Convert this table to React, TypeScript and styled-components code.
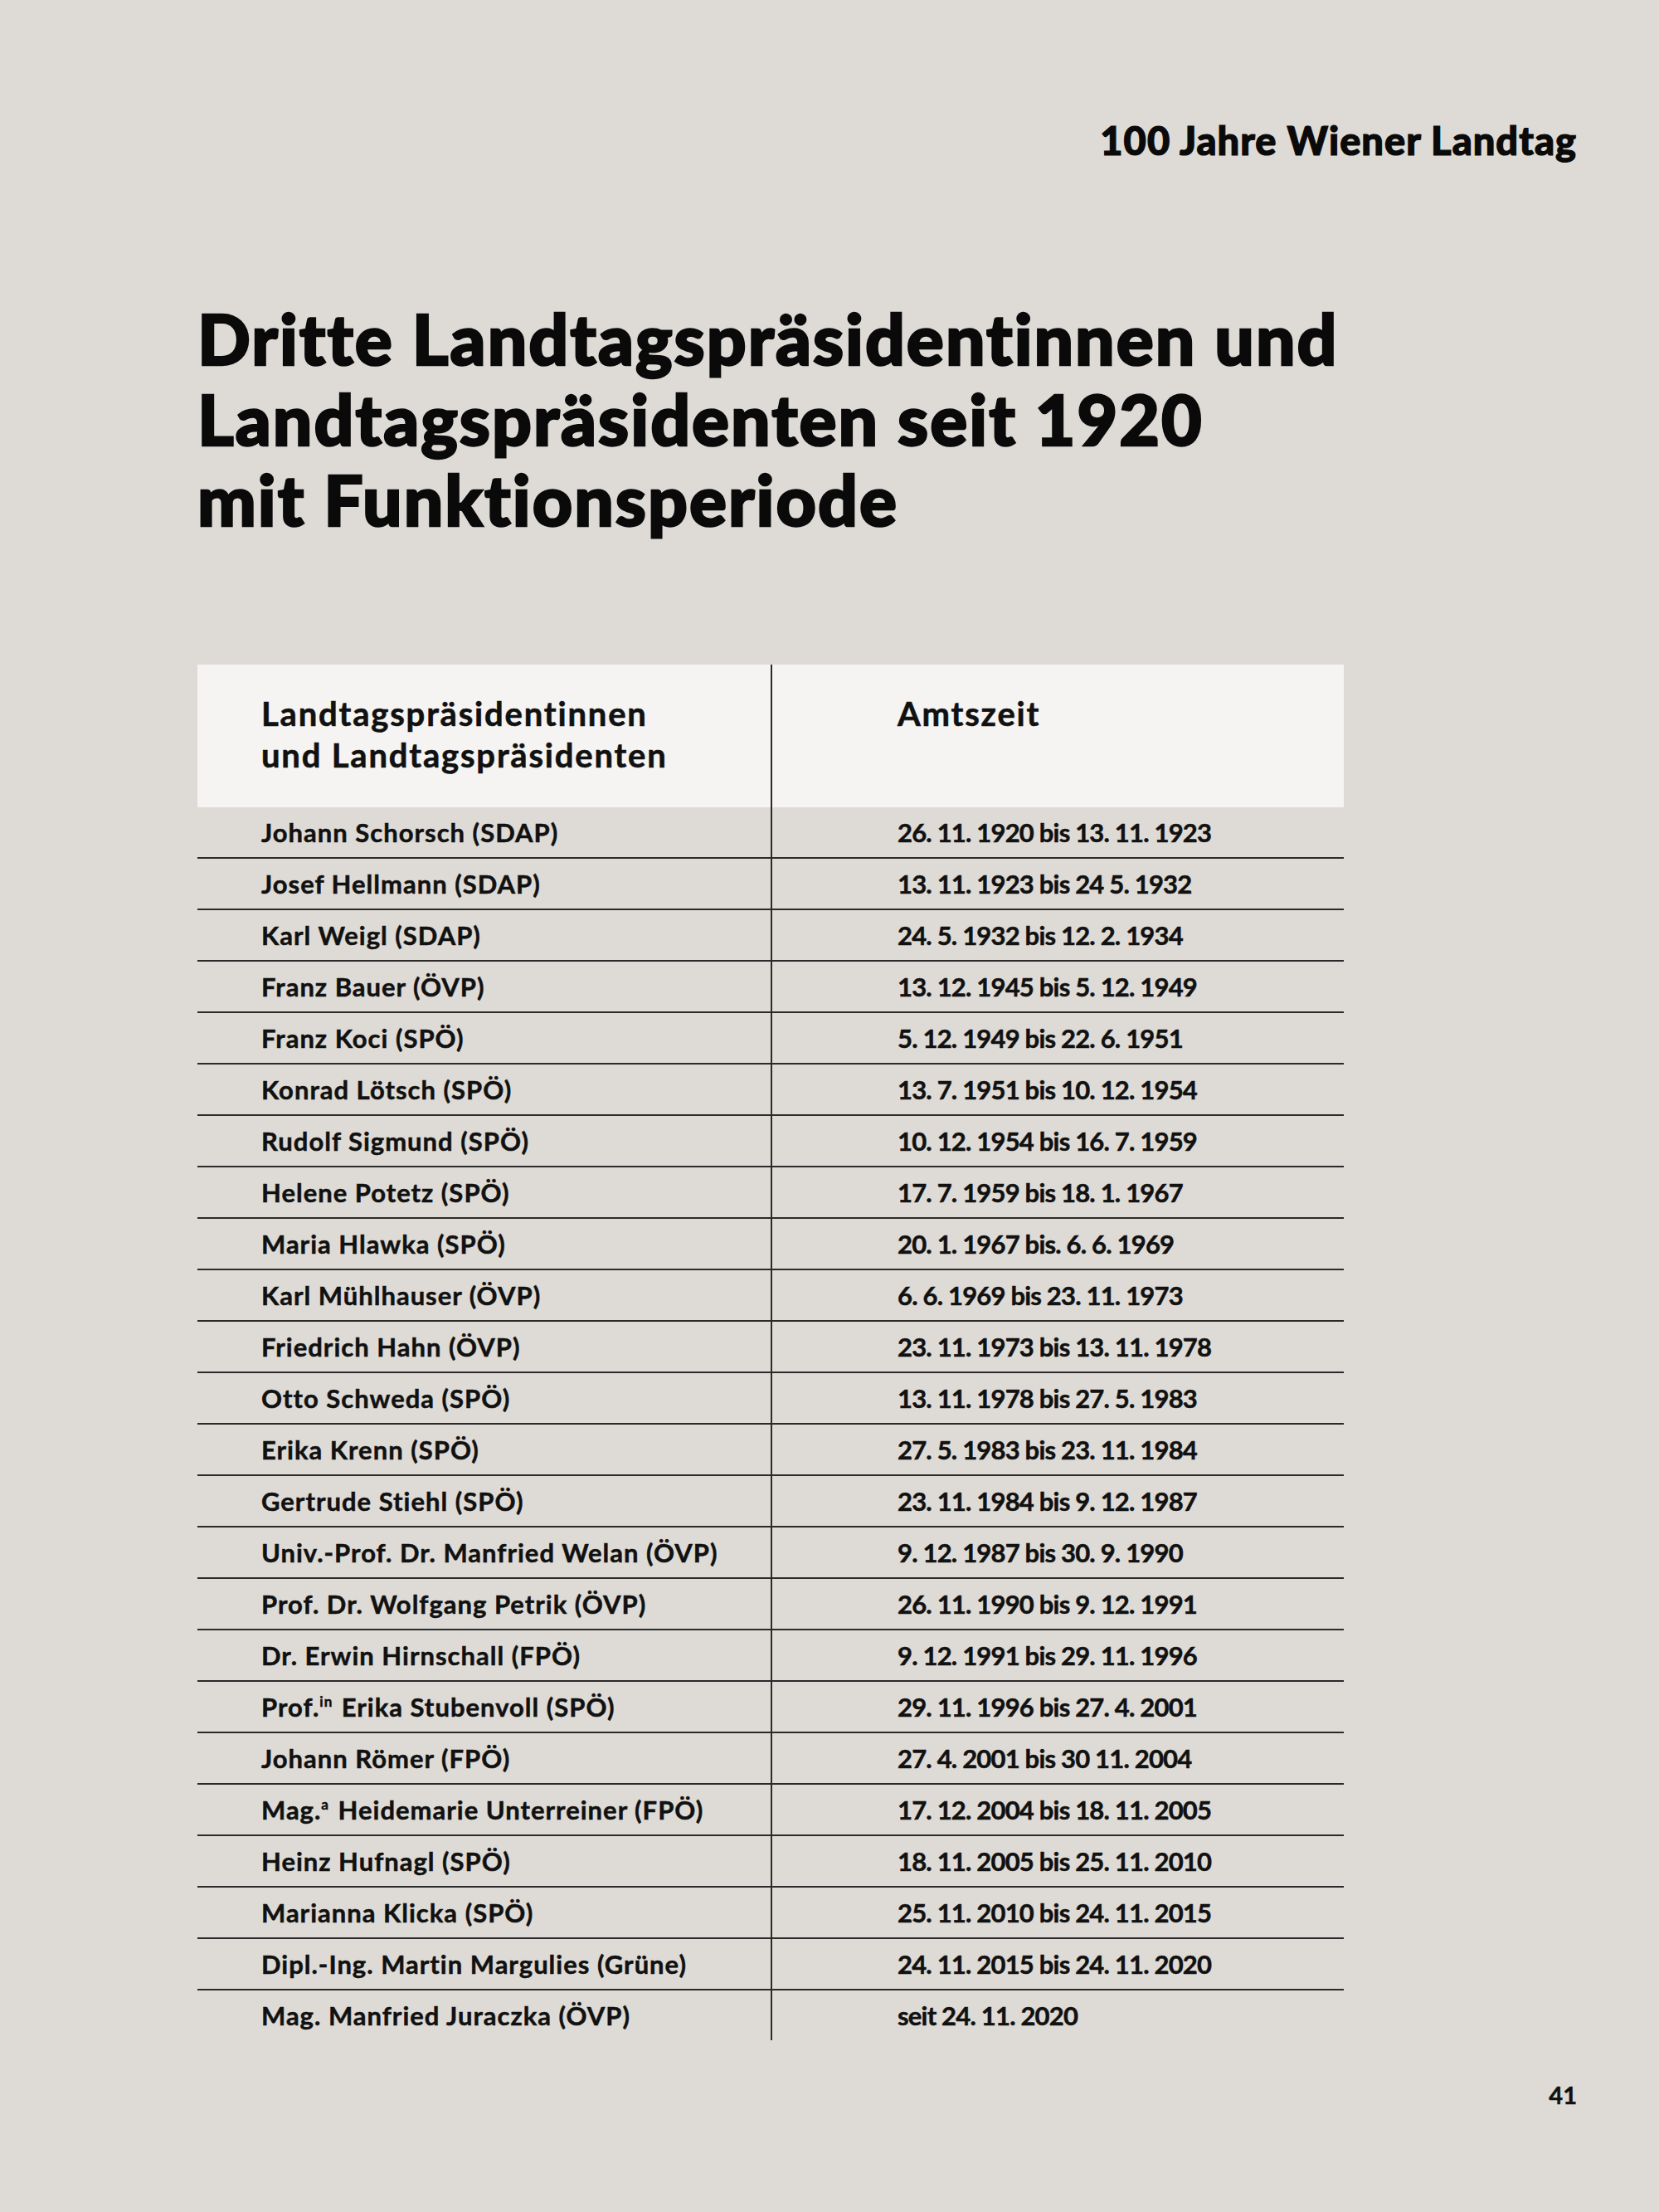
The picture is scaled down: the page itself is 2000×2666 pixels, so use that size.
import React from "react";
import styled, { createGlobalStyle } from "styled-components";

const GlobalStyle = createGlobalStyle`
  html, body {
    margin: 0;
    padding: 0;
    background: #dedbd6;
  }
  body {
    font-family: Lato, "Open Sans", sans-serif;
    color: #111;
  }
`;

interface Entry {
  name: React.ReactNode;
  term: string;
}

const entries: Entry[] = [
  { name: "Johann Schorsch (SDAP)", term: "26. 11. 1920 bis 13. 11. 1923" },
  { name: "Josef Hellmann (SDAP)", term: "13. 11. 1923 bis 24 5. 1932" },
  { name: "Karl Weigl (SDAP)", term: "24. 5. 1932 bis 12. 2. 1934" },
  { name: "Franz Bauer (ÖVP)", term: "13. 12. 1945 bis 5. 12. 1949" },
  { name: "Franz Koci (SPÖ)", term: "5. 12. 1949 bis 22. 6. 1951" },
  { name: "Konrad Lötsch (SPÖ)", term: "13. 7. 1951 bis 10. 12. 1954" },
  { name: "Rudolf Sigmund (SPÖ)", term: "10. 12. 1954 bis 16. 7. 1959" },
  { name: "Helene Potetz (SPÖ)", term: "17. 7. 1959 bis 18. 1. 1967" },
  { name: "Maria Hlawka (SPÖ)", term: "20. 1. 1967 bis. 6. 6. 1969" },
  { name: "Karl Mühlhauser (ÖVP)", term: "6. 6. 1969 bis 23. 11. 1973" },
  { name: "Friedrich Hahn (ÖVP)", term: "23. 11. 1973 bis 13. 11. 1978" },
  { name: "Otto Schweda (SPÖ)", term: "13. 11. 1978 bis 27. 5. 1983" },
  { name: "Erika Krenn (SPÖ)", term: "27. 5. 1983 bis 23. 11. 1984" },
  { name: "Gertrude Stiehl (SPÖ)", term: "23. 11. 1984 bis 9. 12. 1987" },
  { name: "Univ.-Prof. Dr. Manfried Welan (ÖVP)", term: "9. 12. 1987 bis 30. 9. 1990" },
  { name: "Prof. Dr. Wolfgang Petrik (ÖVP)", term: "26. 11. 1990 bis 9. 12. 1991" },
  { name: "Dr. Erwin Hirnschall (FPÖ)", term: "9. 12. 1991 bis 29. 11. 1996" },
  {
    name: (
      <>
        Prof.<Sup>in</Sup> Erika Stubenvoll (SPÖ)
      </>
    ),
    term: "29. 11. 1996 bis 27. 4. 2001",
  },
  { name: "Johann Römer (FPÖ)", term: "27. 4. 2001 bis 30 11. 2004" },
  {
    name: (
      <>
        Mag.<Sup>a</Sup> Heidemarie Unterreiner (FPÖ)
      </>
    ),
    term: "17. 12. 2004 bis 18. 11. 2005",
  },
  { name: "Heinz Hufnagl (SPÖ)", term: "18. 11. 2005 bis 25. 11. 2010" },
  { name: "Marianna Klicka (SPÖ)", term: "25. 11. 2010 bis 24. 11. 2015" },
  { name: "Dipl.-Ing. Martin Margulies (Grüne)", term: "24. 11. 2015 bis 24. 11. 2020" },
  { name: "Mag. Manfried Juraczka (ÖVP)", term: "seit 24. 11. 2020" },
];

function Sup({ children }: { children: React.ReactNode }) {
  return <SupText>{children}</SupText>;
}

const SupText = styled.span`
  font-size: 0.55em;
  vertical-align: 0.7em;
  line-height: 0;
  margin-right: 2px;
`;

const Page = styled.div`
  width: 2000px;
  height: 2666px;
  box-sizing: border-box;
  padding: 141px 99px 0 238px;
  display: flex;
  flex-direction: column;
`;

const RunningHead = styled.div`
  align-self: flex-end;
  font-size: 47px;
  line-height: 56px;
  font-weight: 900;
  letter-spacing: 1px;
  -webkit-text-stroke: 1.2px #0a0a0a;
  color: #0a0a0a;
`;

const Title = styled.h1`
  margin: 162px 0 0;
  font-size: 84px;
  line-height: 97px;
  font-weight: 900;
  letter-spacing: 2px;
  -webkit-text-stroke: 2.4px #0a0a0a;
  color: #0a0a0a;
`;

const Table = styled.div`
  margin-top: 151px;
  width: 1382px;
  display: grid;
  grid-template-columns: 691px 691px;
`;

const HeadCell = styled.div<{ $second?: boolean }>`
  background: #f5f4f2;
  font-size: 40px;
  line-height: 50px;
  font-weight: 700;
  letter-spacing: 1.8px;
  -webkit-text-stroke: 0.6px #111;
  padding: 34px 0 38px ${(p) => (p.$second ? "151px" : "77px")};
  border-left: ${(p) => (p.$second ? "2px solid #2a2a2a" : "none")};
`;

const Cell = styled.div<{ $second?: boolean; $first?: boolean }>`
  font-size: 31px;
  line-height: 60px;
  font-weight: 700;
  letter-spacing: ${(p) => (p.$second ? "-0.8px" : "1px")};
  -webkit-text-stroke: 0.5px #111;
  padding-left: ${(p) => (p.$second ? "151px" : "77px")};
  border-left: ${(p) => (p.$second ? "2px solid #2a2a2a" : "none")};
  border-top: ${(p) => (p.$first ? "none" : "2px solid #2a2a2a")};
  white-space: nowrap;
`;

const PageNumber = styled.div`
  align-self: flex-end;
  margin-top: 48px;
  font-size: 29px;
  line-height: 36px;
  font-weight: 700;
  -webkit-text-stroke: 0.5px #111;
`;

export default function App() {
  return (
    <>
      <GlobalStyle />
      <Page>
        <RunningHead>100 Jahre Wiener Landtag</RunningHead>
        <Title>
          Dritte Landtagspräsidentinnen und
          <br />
          Landtagspräsidenten seit 1920
          <br />
          mit Funktionsperiode
        </Title>
        <Table>
          <HeadCell>
            Landtagspräsidentinnen
            <br />
            und Landtagspräsidenten
          </HeadCell>
          <HeadCell $second>Amtszeit</HeadCell>
          {entries.map((e, i) => (
            <React.Fragment key={i}>
              <Cell $first={i === 0}>{e.name}</Cell>
              <Cell $first={i === 0} $second>
                {e.term}
              </Cell>
            </React.Fragment>
          ))}
        </Table>
        <PageNumber>41</PageNumber>
      </Page>
    </>
  );
}
